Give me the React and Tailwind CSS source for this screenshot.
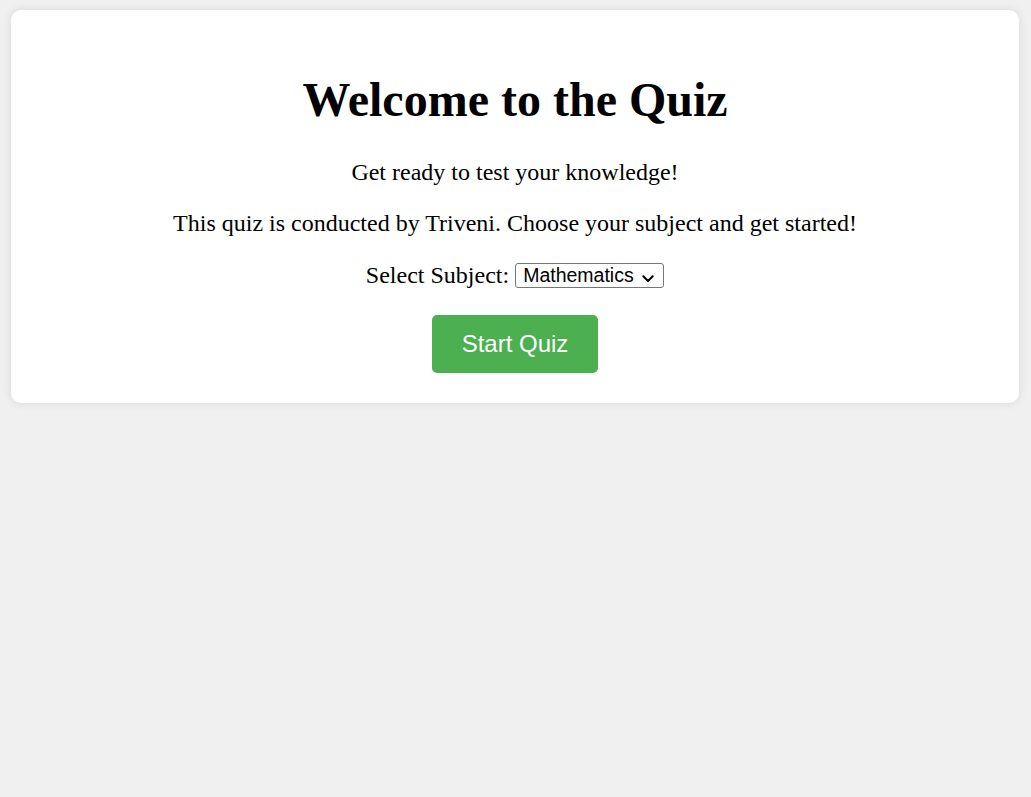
import React from "react";

export default function App() {
  return (
    <div className="min-h-[797px] bg-[#f0f0f0] pt-[10px] pb-[10px]" style={{ fontFamily: '"Liberation Serif", "Times New Roman", serif' }}>
      <div className="ml-[11px] mr-[12px] rounded-[10px] bg-white px-[20px] pt-[20px] pb-[30px] text-center text-black shadow-[0_0_10px_rgba(0,0,0,0.1)]">
        <h1 className="mt-[42px] text-[48px] font-bold leading-[55px]">Welcome to the Quiz</h1>
        <p className="mt-[31px] text-[24px] leading-[28px]">Get ready to test your knowledge!</p>
        <p className="mt-[23px] text-[24px] leading-[28px]">
          This quiz is conducted by Triveni. Choose your subject and get started!
        </p>
        <div className="mt-[24px] flex h-[28px] items-center justify-center gap-[6px] text-[24px] leading-[28px]">
          <span>Select Subject:</span>
          <span className="relative inline-flex">
            <select
              defaultValue="Mathematics"
              className="h-[25px] w-[149px] appearance-none rounded-[3px] border border-[#767676] bg-white pl-[7px] pr-[24px] text-left text-[19.5px] leading-[23px] text-black"
              style={{ fontFamily: '"Liberation Sans", Arial, sans-serif' }}
            >
              <option>Mathematics</option>
              <option>Science</option>
              <option>History</option>
            </select>
            <svg
              className="pointer-events-none absolute right-[10px] top-[12px]"
              width="12"
              height="8"
              viewBox="0 0 12 8"
              fill="none"
            >
              <path d="M1.3 1.3 L6 6 L10.7 1.3" stroke="#000" strokeWidth="2" strokeLinecap="round" strokeLinejoin="round" />
            </svg>
          </span>
        </div>
        <button
          className="mt-[26px] rounded-[5px] bg-[#4caf50] px-[30px] py-[15px] text-[24px] leading-[28px] text-white"
          style={{ fontFamily: '"Liberation Sans", Arial, sans-serif' }}
        >
          Start Quiz
        </button>
      </div>
    </div>
  );
}
